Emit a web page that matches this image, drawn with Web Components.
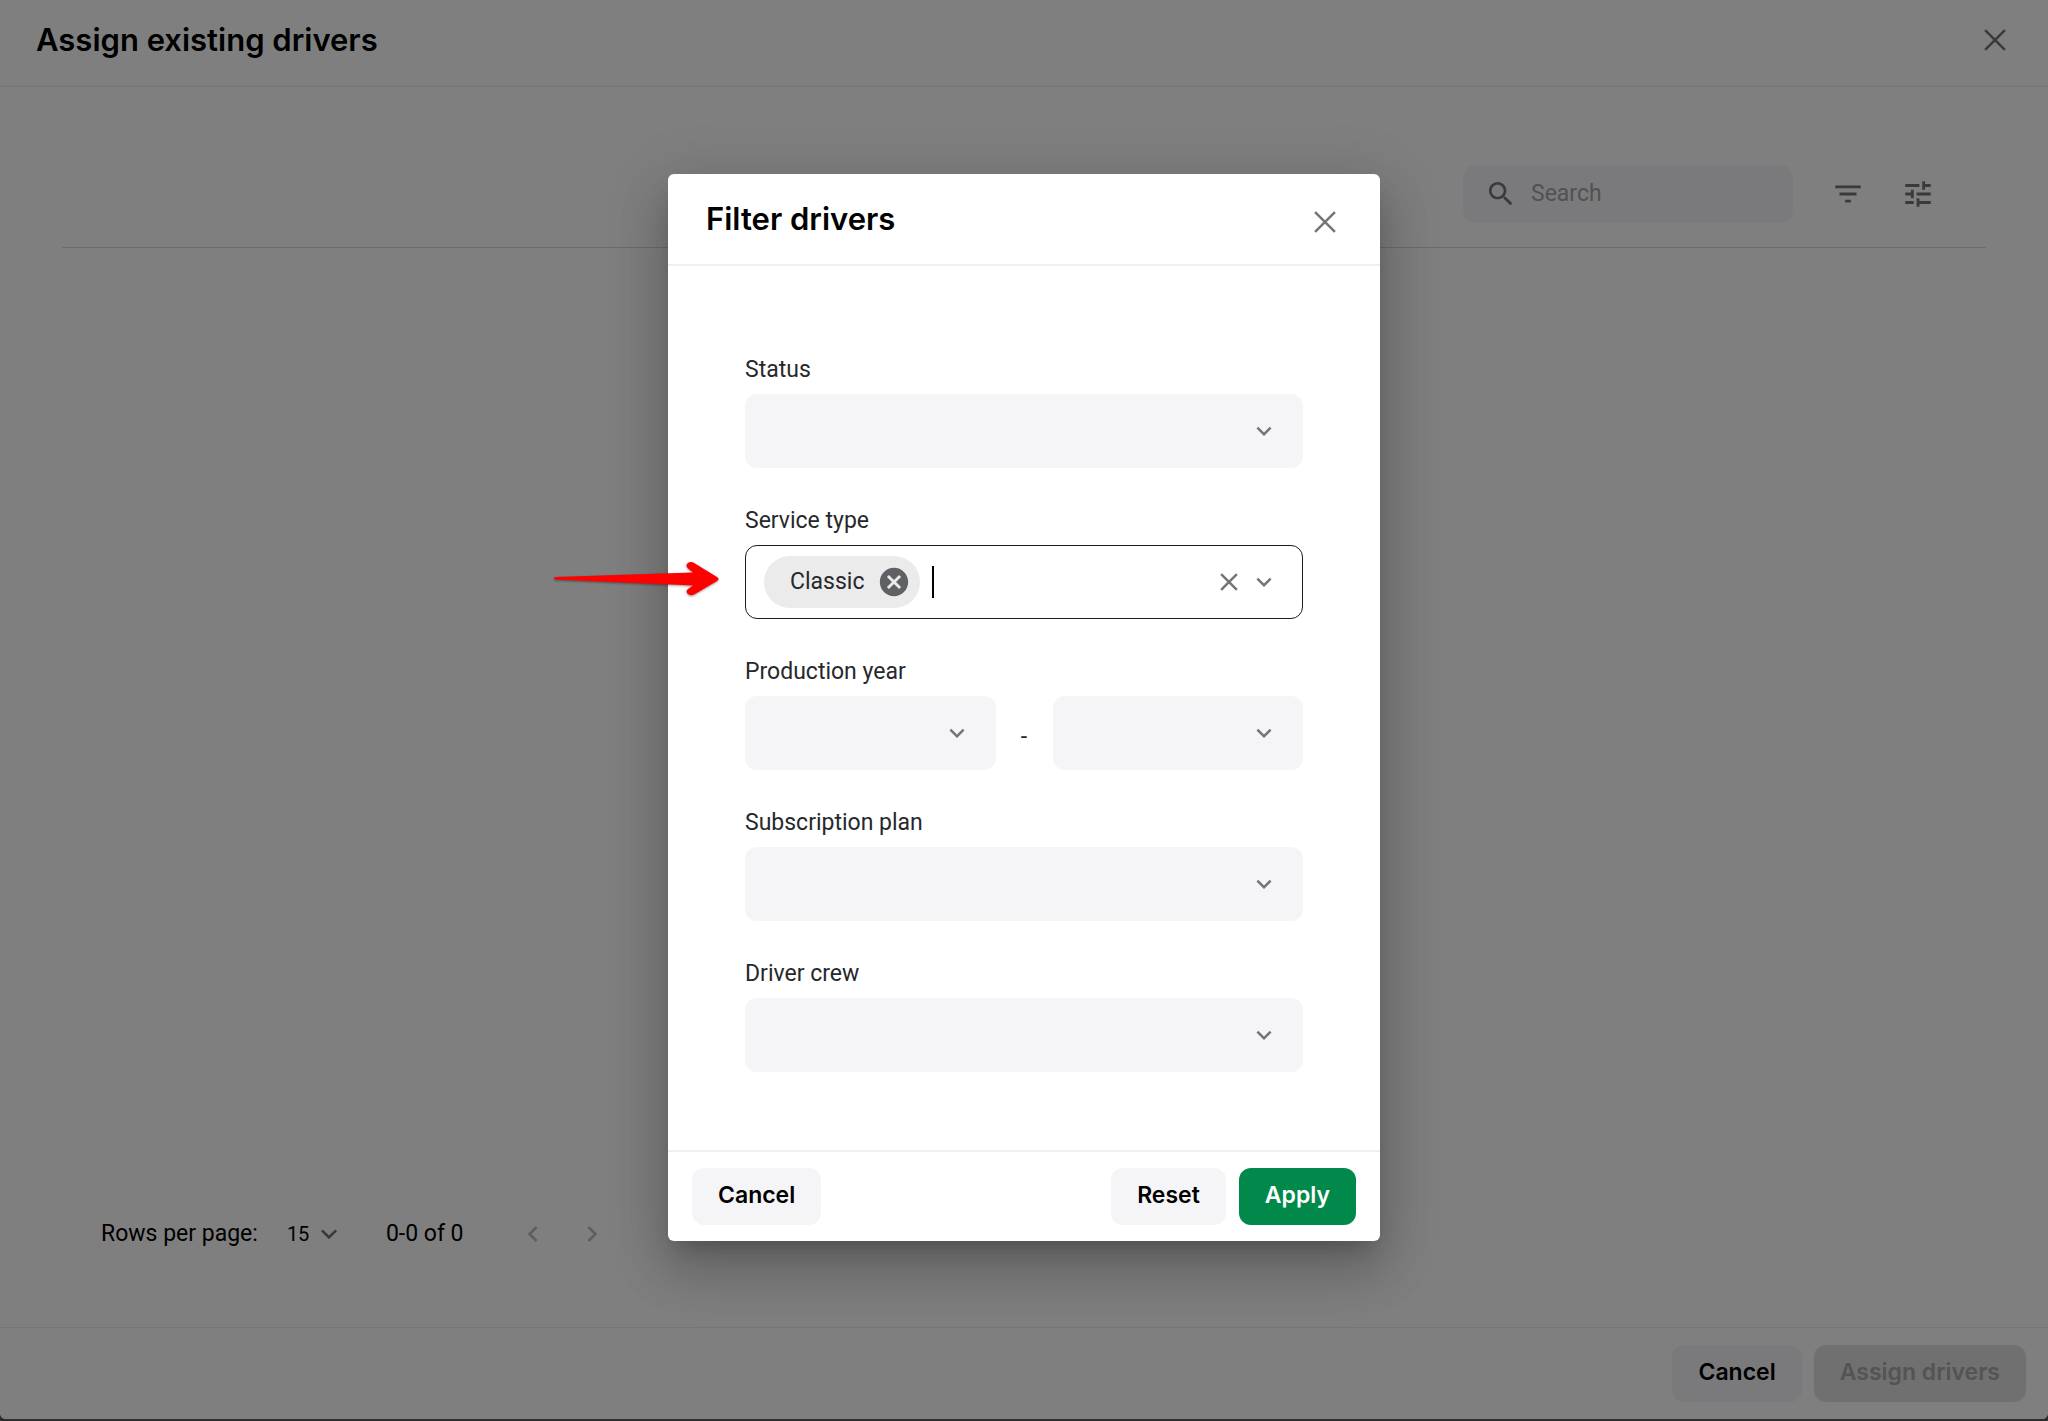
<!DOCTYPE html>
<html lang="en">
<head>
<meta charset="utf-8">
<title>Assign existing drivers</title>
<style>
  body {
    margin: 0;
    background: #2c2e30;
    font-family: Roboto, "Liberation Sans", sans-serif;
    font-size: 23px;
    line-height: 26px;
    color: #000;
  }
</style>
</head>
<body>
<drivers-page></drivers-page>

<script>
const HEADING_FONT = 'Inter, "Liberation Sans", sans-serif';

const icons = {
  close: '<path d="M5 5l14 14M19 5L5 19" fill="none" stroke="currentColor" stroke-width="1.8"/>',
  clear: '<path d="M19 6.41L17.59 5 12 10.59 6.41 5 5 6.41 10.59 12 5 17.59 6.41 19 12 13.41 17.59 19 19 17.59 13.41 12z"/>',
  down: '<path d="M7.41 8.59L12 13.17l4.59-4.58L18 10l-6 6-6-6z"/>',
  left: '<path d="M15.41 16.59L10.83 12l4.58-4.59L14 6l-6 6 6 6z"/>',
  right: '<path d="M8.59 16.59L13.17 12 8.59 7.41 10 6l6 6-6 6z"/>',
  search: '<path d="M15.5 14h-.79l-.28-.27C15.41 12.59 16 11.11 16 9.5 16 5.91 13.09 3 9.5 3S3 5.91 3 9.5 5.91 16 9.5 16c1.61 0 3.09-.59 4.23-1.57l.27.28v.79l5 4.99L20.49 19zm-6 0C7.01 14 5 11.99 5 9.5S7.01 5 9.5 5 14 7.01 14 9.5 11.99 14 9.5 14"/>',
  filter: '<path d="M10 18h4v-2h-4zM3 6v2h18V6zm3 7h12v-2H6z"/>',
  tune: '<path d="M3 17v2h6v-2zM3 5v2h10V5zm10 16v-2h8v-2h-8v-2h-2v6zM7 9v2H3v2h4v2h2V9zm14 4v-2H11v2zm-6-4h2V7h4V5h-4V3h-2z"/>',
  cancel: '<path d="M12 2C6.47 2 2 6.47 2 12s4.47 10 10 10 10-4.47 10-10S17.53 2 12 2m5 13.59L15.59 17 12 13.41 8.41 17 7 15.59 10.59 12 7 8.41 8.41 7 12 10.59 15.59 7 17 8.41 13.41 12z"/>',
};

// Shared by every labelled control of the form
const labelStyle = 'label { display: block; margin-bottom: 11px; color: #27282c; }';

function render(el, html) {
  el.attachShadow({ mode: 'open' }).innerHTML = html;
}

customElements.define('app-icon', class AppIcon extends HTMLElement {
  connectedCallback() {
    const size = this.getAttribute('size') ?? '30';
    render(this, `
      <style>
        :host { display: block; width: ${size}px; height: ${size}px; flex: none; }
        svg { display: block; width: 100%; height: 100%; fill: currentColor; }
      </style>
      <svg viewBox="0 0 24 24" aria-hidden="true">${icons[this.getAttribute('name')]}</svg>
    `);
  }
});

customElements.define('icon-button', class IconButton extends HTMLElement {
  connectedCallback() {
    const disabled = this.hasAttribute('disabled') ? 'disabled' : '';
    render(this, `
      <style>
        :host { display: block; flex: none; }
        button {
          display: block;
          padding: 0;
          border: 0;
          background: none;
          color: #757575;
          cursor: pointer;
        }
        button:disabled { color: #bdbdbd; cursor: default; }
      </style>
      <button type="button" aria-label="${this.getAttribute('label')}" ${disabled}>
        <app-icon name="${this.getAttribute('icon')}" size="${this.getAttribute('size') ?? '34'}"></app-icon>
      </button>
    `);
  }
});

customElements.define('app-button', class AppButton extends HTMLElement {
  connectedCallback() {
    const disabled = this.hasAttribute('disabled') ? 'disabled' : '';
    render(this, `
      <style>
        :host { display: block; flex: none; }
        button {
          display: block;
          padding: 14px 26px 16px;
          border: 0;
          border-radius: 12px;
          background: #f5f5f8;
          color: #000;
          font: 600 23px/27px ${HEADING_FONT};
          cursor: pointer;
        }
        :host([primary]) button { background: #00894a; color: #fff; }
        button:disabled { background: #e0e0e0; color: #a8a8a8; cursor: default; }
      </style>
      <button type="button" ${disabled}><slot></slot></button>
    `);
  }
});

customElements.define('bar-header', class BarHeader extends HTMLElement {
  connectedCallback() {
    render(this, `
      <style>
        :host {
          display: flex;
          align-items: center;
          justify-content: space-between;
          border-bottom: 2px solid #f0f0f1;
        }
        h2 { margin: 0; font: 600 31px/40px ${HEADING_FONT}; }
      </style>
      <h2><slot></slot></h2>
      <icon-button icon="close" label="Close"></icon-button>
    `);
  }
});

customElements.define('search-box', class SearchBox extends HTMLElement {
  connectedCallback() {
    render(this, `
      <style>
        :host {
          display: flex;
          align-items: center;
          gap: 14px;
          box-sizing: border-box;
          width: 330px;
          height: 58px;
          padding: 0 22px;
          border-radius: 12px;
          background: #f5f5f8;
          color: #757575;
        }
        input {
          flex: 1;
          min-width: 0;
          padding: 0;
          border: 0;
          outline: 0;
          background: none;
          font: inherit;
        }
        input::placeholder { color: #a3a3a3; }
      </style>
      <app-icon name="search" size="32"></app-icon>
      <input type="search" placeholder="Search" aria-label="Search">
    `);
  }
});

// Native select with the chevron stacked over its right end.
// Without a label attribute only aria-label names the control.
customElements.define('select-box', class SelectBox extends HTMLElement {
  connectedCallback() {
    const label = this.getAttribute('label');
    const name = label ? '' : `aria-label="${this.getAttribute('name')}"`;
    render(this, `
      <style>
        :host { display: block; flex: 1; }
        ${labelStyle}
        .control { display: grid; align-items: center; }
        select, app-icon { grid-area: 1 / 1; }
        select {
          appearance: none;
          width: 100%;
          height: 74px;
          padding: 0 56px 0 20px;
          border: 0;
          border-radius: 12px;
          background: #f5f5f8;
          font: inherit;
        }
        app-icon {
          justify-self: end;
          margin-right: 24px;
          color: #757575;
          pointer-events: none;
        }
      </style>
      ${label ? `<label for="select">${label}</label>` : ''}
      <div class="control">
        <select id="select" ${name}><option></option></select>
        <app-icon name="down"></app-icon>
      </div>
    `);
  }
});

customElements.define('chip-input', class ChipInput extends HTMLElement {
  connectedCallback() {
    render(this, `
      <style>
        :host { display: block; }
        ${labelStyle}
        .control {
          display: flex;
          align-items: center;
          position: relative;
          box-sizing: border-box;
          height: 74px;
          padding: 0 23px 0 18px;
          border: 1px solid #1c1c1e;
          border-radius: 12px;
          background: #fff;
          color: #757575;
        }
        .chip {
          display: flex;
          align-items: center;
          gap: 13px;
          height: 52px;
          padding: 0 9px 0 26px;
          border-radius: 26px;
          background: #ebebeb;
          color: #27282c;
        }
        button {
          padding: 0;
          border: 0;
          background: none;
          color: #5f6165;
        }
        .clear { margin-right: 5px; color: #757575; }
        .caret { width: 2px; height: 32px; margin-left: 12px; background: #000; }
        input {
          flex: 1;
          min-width: 0;
          padding: 0;
          border: 0;
          outline: 0;
          background: none;
          font: inherit;
        }
      </style>
      <label for="input">${this.getAttribute('label')}</label>
      <div class="control">
        <span class="chip">${this.getAttribute('value')}
          <button type="button" aria-label="Remove"><app-icon name="cancel" size="34"></app-icon></button>
        </span>
        <span class="caret"></span>
        <input id="input" type="text">
        <button class="clear" type="button" aria-label="Clear"><app-icon name="clear"></app-icon></button>
        <app-icon name="down"></app-icon>
        <slot></slot>
      </div>
    `);
  }
});

// Red pointer that lies over the dialog edge, beside the field it marks
customElements.define('callout-arrow', class CalloutArrow extends HTMLElement {
  connectedCallback() {
    render(this, `
      <style>
        :host { position: absolute; right: 100%; top: 50%; margin: -22px 26px 0 0; }
        svg { display: block; overflow: visible; filter: drop-shadow(0 1px 1px rgba(0, 0, 0, .4)); }
      </style>
      <svg width="166" height="38" viewBox="0 0 166 38" aria-hidden="true">
        <path fill="#f00" d="M1 17L139 12.500L134 8.500Q131 5 134 3Q137 1 141 3.500L163 17Q166 19 163 21L141 34Q137 36.500 134 34Q131 31.500 134 29L139 25.500L1 19.500Q-1 18.300 1 17Z"/>
      </svg>
    `);
  }
});

customElements.define('filter-dialog', class FilterDialog extends HTMLElement {
  connectedCallback() {
    render(this, `
      <style>
        :host {
          display: block;
          width: 712px;
          border-radius: 6px;
          background: #fff;
          box-shadow: 0 14px 20px -9px rgba(0, 0, 0, .2),
            0 31px 50px 4px rgba(0, 0, 0, .14),
            0 12px 60px 10px rgba(0, 0, 0, .12);
        }
        bar-header { align-items: flex-end; padding: 25px 38px; }
        form {
          display: flex;
          flex-direction: column;
          gap: 40px;
          padding: 91px 77px 78px;
        }
        .range { display: flex; align-items: flex-end; }
        .dash { width: 57px; line-height: 66px; text-align: center; color: #27282c; }
        footer {
          display: flex;
          gap: 13px;
          padding: 16px 24px;
          border-top: 2px solid #f0f0f1;
        }
        .spacer { flex: 1; }
      </style>
      <bar-header>Filter drivers</bar-header>
      <form>
        <select-box label="Status"></select-box>
        <chip-input label="Service type" value="Classic">
          <callout-arrow></callout-arrow>
        </chip-input>
        <div class="range">
          <select-box label="Production year"></select-box>
          <span class="dash">-</span>
          <select-box name="Production year to"></select-box>
        </div>
        <select-box label="Subscription plan"></select-box>
        <select-box label="Driver crew"></select-box>
      </form>
      <footer>
        <app-button>Cancel</app-button>
        <span class="spacer"></span>
        <app-button>Reset</app-button>
        <app-button primary>Apply</app-button>
      </footer>
    `);
  }
});

customElements.define('table-pagination', class TablePagination extends HTMLElement {
  connectedCallback() {
    render(this, `
      <style>
        :host { display: flex; align-items: center; height: 34px; }
        .rows { display: grid; align-items: center; width: 58px; margin: 0 41px 0 29px; color: #757575; }
        select, .rows app-icon { grid-area: 1 / 1; }
        select {
          appearance: none;
          width: 100%;
          padding: 0;
          border: 0;
          background: none;
          color: #000;
          font: 20px/26px Roboto, "Liberation Sans", sans-serif;
        }
        .rows app-icon { justify-self: end; pointer-events: none; }
        .pages { display: flex; gap: 27px; margin-left: 53px; }
      </style>
      <label for="rows">Rows per page:</label>
      <div class="rows">
        <select id="rows"><option>15</option></select>
        <app-icon name="down" size="32"></app-icon>
      </div>
      <span>0-0 of 0</span>
      <div class="pages">
        <icon-button icon="left" size="32" label="Previous page" disabled></icon-button>
        <icon-button icon="right" size="32" label="Next page" disabled></icon-button>
      </div>
    `);
  }
});

customElements.define('drivers-page', class DriversPage extends HTMLElement {
  connectedCallback() {
    render(this, `
      <style>
        :host {
          display: flex;
          flex-direction: column;
          position: relative;
          min-height: calc(100vh - 2px);
          overflow: hidden;
          border-radius: 0 0 6px 6px;
          background: #fff;
        }
        bar-header { padding: 20px 36px 25px; }
        main { display: flex; flex: 1; flex-direction: column; padding: 78px 62px 76px; }
        .toolbar {
          display: flex;
          align-items: center;
          justify-content: flex-end;
          gap: 38px;
          padding: 0 51px 24px 0;
          border-bottom: 1px solid #d8d8d8;
        }
        .actions { display: flex; gap: 36px; }
        table-pagination { margin: auto 0 0 39px; }
        footer {
          display: flex;
          justify-content: flex-end;
          gap: 12px;
          padding: 17px 22px;
          border-top: 1px solid #ececec;
        }
        .scrim {
          position: absolute;
          inset: 0;
          display: flex;
          align-items: center;
          justify-content: center;
          padding-bottom: 4px;
          background: rgba(0, 0, 0, .5);
        }
      </style>
      <bar-header>Assign existing drivers</bar-header>
      <main>
        <div class="toolbar">
          <search-box></search-box>
          <div class="actions">
            <icon-button icon="filter" label="Filter"></icon-button>
            <icon-button icon="tune" label="Columns"></icon-button>
          </div>
        </div>
        <table-pagination></table-pagination>
      </main>
      <footer>
        <app-button>Cancel</app-button>
        <app-button disabled>Assign drivers</app-button>
      </footer>
      <div class="scrim">
        <filter-dialog role="dialog" aria-label="Filter drivers"></filter-dialog>
      </div>
    `);
  }
});
</script>
</body>
</html>
